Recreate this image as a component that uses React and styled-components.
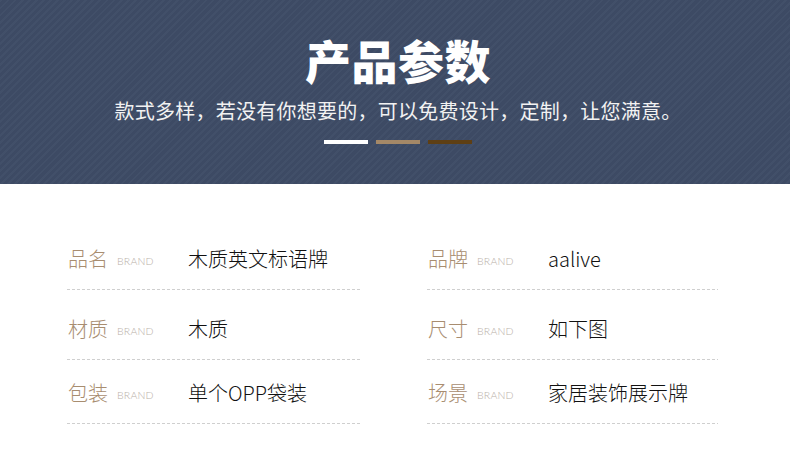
import styled, { createGlobalStyle } from 'styled-components';

const GlobalStyle = createGlobalStyle`
  html, body {
    margin: 0;
    padding: 0;
    background: #ffffff;
  }
  body {
    font-family: "Noto Sans CJK SC", "Noto Sans", sans-serif;
  }
`

const Header = styled.header`
  height: 184px;
  box-sizing: border-box;
  padding: 31px 0 0 6px;
  display: flex;
  flex-direction: column;
  align-items: center;
  background-color: #3e4c66;
  background-image: repeating-linear-gradient(
    135deg,
    rgba(255, 255, 255, 0.02) 0 2px,
    rgba(0, 0, 0, 0.025) 2px 5px
  );
`

const Title = styled.h1`
  margin: 0;
  font-size: 46px;
  line-height: 56px;
  font-weight: 900;
  color: #ffffff;
  letter-spacing: 0.5px;
`

const Subtitle = styled.p`
  margin: 10px 0 0;
  font-size: 20px;
  line-height: 28px;
  color: #f2f2f2;
  letter-spacing: 0.25px;
`

const Bars = styled.div`
  display: flex;
  gap: 8px;
  margin-top: 15px;
`

const Bar = styled.span`
  width: 44px;
  height: 4px;
  background: ${props => props.color};
`

const Specs = styled.section`
  display: grid;
  grid-template-columns: 293px 291px;
  column-gap: 67px;
  padding: 59px 0 0 67px;
`

const Item = styled.div`
  display: flex;
  align-items: center;
  margin-top: ${props => props.spaceAbove}px;
  padding: 0 0 15px 1px;
  background-image: repeating-linear-gradient(to right, #cfcfcf 0 3px, transparent 3px 5px);
  background-size: 100% 1px;
  background-position: bottom left;
  background-repeat: no-repeat;
  line-height: 28px;
`

const Label = styled.span`
  width: 49px;
  font-size: 20px;
  font-weight: 300;
  color: #a88d70;
`

const Brand = styled.span`
  width: 71px;
  font-family: "Lato", "Noto Sans", sans-serif;
  font-size: 10.5px;
  font-weight: 300;
  color: #b9b1a8;
  letter-spacing: 0.2px;
  padding-top: 4px;
`

const Value = styled.span`
  font-size: 20px;
  font-weight: 300;
  color: #111111;
`

const rows = [
  { space: 0, left: ['品名', '木质英文标语牌'], right: ['品牌', 'aalive'] },
  { space: 23, left: ['材质', '木质'], right: ['尺寸', '如下图'] },
  { space: 17, left: ['包装', '单个OPP袋装'], right: ['场景', '家居装饰展示牌'] },
]

function App() {
  return (
    <>
      <GlobalStyle />
      <Header>
        <Title>产品参数</Title>
        <Subtitle>款式多样，若没有你想要的，可以免费设计，定制，让您满意。</Subtitle>
        <Bars>
          <Bar color="#ffffff" />
          <Bar color="#a48867" />
          <Bar color="#5e3f14" />
        </Bars>
      </Header>
      <Specs>
        {rows.map(row => [row.left, row.right].map(cell => (
          <Item key={cell[0]} spaceAbove={row.space}>
            <Label>{cell[0]}</Label>
            <Brand>BRAND</Brand>
            <Value>{cell[1]}</Value>
          </Item>
        )))}
      </Specs>
    </>
  );
}

export default App;
